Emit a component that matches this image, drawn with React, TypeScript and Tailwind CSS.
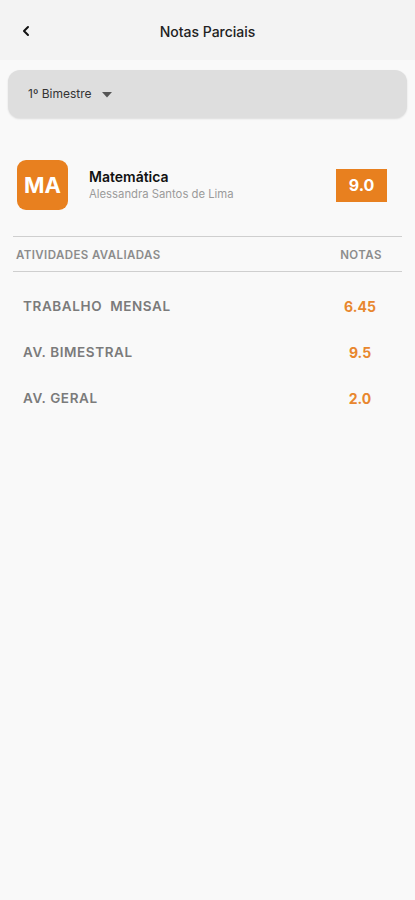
import { ChevronLeft } from "lucide-react";

const atividades = [
  { nome: "TRABALHO  MENSAL", nota: "6.45" },
  { nome: "AV. BIMESTRAL", nota: "9.5" },
  { nome: "AV. GERAL", nota: "2.0" },
];

export default function App() {
  return (
    <div
      className="min-h-[900px] w-full bg-[#f9f9f9] text-[#1a1a1a]"
      style={{ fontFamily: "Inter, 'Noto Sans', sans-serif" }}
    >
      {/* header */}
      <header className="relative flex h-[60px] items-center justify-center bg-[#f3f3f3]">
        <button className="absolute left-[18px] top-[23px] text-[#111]">
          <ChevronLeft size={16} strokeWidth={3} />
        </button>
        <h1 className="pt-[2px] text-[14px] font-medium text-[#222]">Notas Parciais</h1>
      </header>

      {/* seletor de bimestre */}
      <div className="px-2 pt-[10px]">
        <div className="flex h-[48px] items-center gap-[10px] rounded-[12px] bg-[#dedede] pl-5 shadow-[0_1px_2px_rgba(0,0,0,0.12)]">
          <span className="text-[12px] text-[#333]">1º Bimestre</span>
          <svg width="10" height="6" viewBox="0 0 10 6" className="mt-[1px]">
            <path d="M0 0h10L5 5.5z" fill="#555" />
          </svg>
        </div>
      </div>

      {/* disciplina */}
      <div className="flex items-center pl-[17px] pr-[28px] pt-[42px]">
        <div className="flex h-[50px] w-[51px] items-center justify-center rounded-[9px] bg-[#e8801f] text-[22px] font-bold text-white">
          MA
        </div>
        <div className="ml-[21px] flex flex-1 flex-col">
          <span className="text-[14px] font-semibold leading-[18px] text-[#111]">Matemática</span>
          <span className="text-[11.3px] leading-[16px] text-[#9b9b9b]">Alessandra Santos de Lima</span>
        </div>
        <div className="flex h-[33px] w-[51px] items-center justify-center bg-[#e8801f] text-[16px] font-bold text-white">
          9.0
        </div>
      </div>

      {/* tabela */}
      <div className="mx-[13px] mt-[26px] border-y border-[#cfcfcf]">
        <div className="flex h-[34px] items-center justify-between pl-[3px] pr-[20px] pt-[3px] text-[11.5px] font-semibold tracking-[0.4px] text-[#8c8c8c]">
          <span>ATIVIDADES AVALIADAS</span>
          <span className="w-[42px] text-center">NOTAS</span>
        </div>
      </div>

      <div className="mx-[13px] flex flex-col pt-[11px]">
        {atividades.map((a) => (
          <div key={a.nome} className="flex h-[46px] items-center justify-between pl-[10px] pr-[22px]">
            <span className="whitespace-pre text-[13.5px] font-semibold tracking-[0.6px] text-[#7b7b7b]">{a.nome}</span>
            <span className="w-[40px] text-center text-[14px] font-bold text-[#e8872e]">{a.nota}</span>
          </div>
        ))}
      </div>
    </div>
  );
}
